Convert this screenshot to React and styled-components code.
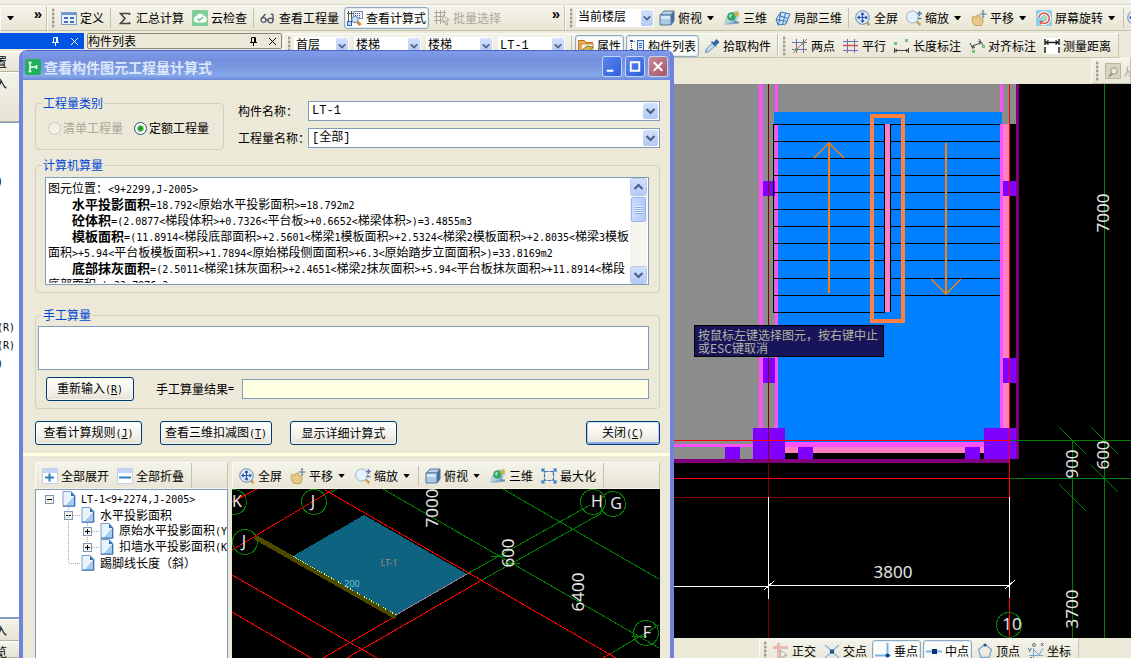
import React from "react"
import styled, { createGlobalStyle, css } from "styled-components"

const GlobalStyle = createGlobalStyle`
  * { box-sizing: border-box; }
  body {
    margin: 0;
    background: #ece9d8;
    color: #000;
    font: 12px/16px "Noto Sans CJK SC", "Liberation Sans", sans-serif;
  }
  button, select, input, textarea {
    margin: 0;
    font: inherit;
    color: inherit;
  }
`

/* ---------- text ---------- */

const Latin = styled.span`
  font-family: "DejaVu Sans Mono", "Liberation Mono", monospace;
  font-size: 10px;
`

const Strong = styled.b`
  font-size: 13px;
`

// half-width runs are set in the mono face, the rest stays in the CJK face
const Mixed = ({ children }) =>
  children
    .split(/([\x20-\x7e]+)/)
    .map((part, i) => (i % 2 ? <Latin key={i}>{part}</Latin> : part))

/* ---------- icons ---------- */

const IconSvg = styled.svg`
  flex: none;
  width: 16px;
  height: 16px;
  display: block;
`

const glyphs = {
  define: (
    <>
      <rect x="0.5" y="2.5" width="15" height="12" fill="#e8f0fb" stroke="#7d9cc9" />
      <path d="M1 3h14v2H1z" fill="#6f93cf" />
      <path d="M3 7h4v2H3zM9 7h4v2H9zM3 11h4v2H3zM9 11h4v2H9z" fill="#4a6fae" />
    </>
  ),
  sum: <path d="M12.500 5V3.500h-9L8 8.500 3.500 13.500h9V12" fill="none" stroke="#444" strokeWidth="1.600" />,
  cloud: (
    <>
      <rect width="16" height="16" rx="1" fill="#7fcf9a" />
      <path d="M4.500 12.500a3.300 3.300 0 0 1 0-6.500 4.200 4.200 0 0 1 7.500 0 3.300 3.300 0 0 1 .3 6.500z" fill="#fff" />
      <path d="M5.500 8.500l2 2 3.500-3.500" fill="none" stroke="#6cc48a" strokeWidth="1.500" />
    </>
  ),
  glasses: (
    <g fill="none" stroke="#4d566b" strokeWidth="1.300">
      <ellipse cx="3.500" cy="10" rx="2.500" ry="2.300" />
      <ellipse cx="10.500" cy="10.500" rx="2.500" ry="2.300" />
      <path d="M1.500 8.500L5.500 4M6 10h2M13 10.500V4.500l-2-.5" />
    </g>
  ),
  formula: (
    <>
      <path d="M1.500 1v13M4.500 1v13M0 3.500h6" stroke="#555" fill="none" />
      <rect x="6.500" y="1.500" width="9" height="7" fill="#eef3fa" stroke="#7a8fb0" />
      <path d="M8 3.500h6M8 5.500h6M8 7.500h6" stroke="#4a5f88" strokeDasharray="1 1" />
      <rect x="0.500" y="11.500" width="4" height="4" fill="#bcd6f5" stroke="#2a62b8" />
      <circle cx="8" cy="9.500" r="3.200" fill="#cfe6f8" stroke="#5e86b8" />
      <path d="M10.500 12l3 3" stroke="#d9822b" strokeWidth="3" />
    </>
  ),
  batch: (
    <g fill="none" stroke="#aaa899">
      <path d="M0 2.500h12M0 6.500h9M0 10.500h8M2.500 0v14M6.500 0v14M10.500 0v6" />
      <path d="M9 5l6 5-3 .5 2 4-2 .5-1.500-4L9 13z" fill="#ece9d8" />
    </g>
  ),
  cube: (
    <>
      <path d="M1 5l4-4h10l-3 4z" fill="#b8cfe4" stroke="#54789c" />
      <path d="M12 5l3-4v10l-3 4z" fill="#3f6c99" stroke="#54789c" />
      <path d="M1 5h11v10H1z" fill="#a9c9e8" stroke="#54789c" />
      <path d="M2 6h9v3H2z" fill="#d8e9f7" />
    </>
  ),
  orbit: (
    <>
      <path d="M0 14.500C0 8 5 2 14 .5c2 2 2 5 0 8-3 4-8 6-14 6z" fill="#b9d0dd" />
      <path d="M0 14.500c5-1 9-3 12-6l1 5-5 1z" fill="#8fb0c8" />
      <circle cx="7.500" cy="6.500" r="4.300" fill="#2fa566" />
      <path d="M5 6.500a2.500 2.500 0 0 1 3-2.500l-1.500 4z" fill="#a8ecd0" />
      <circle cx="12.500" cy="4" r="2.300" fill="#d9ad38" />
      <path d="M10 12.500h5" stroke="#5a8cc0" strokeWidth="2" />
    </>
  ),
  part3d: (
    <g fill="#cfe4f6" stroke="#3f78b5">
      <path d="M1 9l5-7 9 2-4 10-8 1z" />
      <path d="M3.500 5.500l9.500 3M1.500 9.500l10.500 2M6 2L3.500 14.500M10.500 3L7.500 14.500" fill="none" />
    </g>
  ),
  full: (
    <>
      <path d="M11.500 12l3 3" stroke="#cf9a4a" strokeWidth="2.500" />
      <circle cx="7.500" cy="7.500" r="6.800" fill="#dbe9fa" stroke="#6d87ad" />
      <path d="M7.500 3v9M3 7.500h9M6 4.500L7.500 3 9 4.500M6 10.500L7.500 12 9 10.500M4.500 6L3 7.500 4.500 9M10.500 6L12 7.500 10.500 9" fill="none" stroke="#2c55a8" strokeWidth="1.200" />
    </>
  ),
  zoom: (
    <>
      <path d="M10 11l4.500 4" stroke="#cfa060" strokeWidth="2.500" />
      <circle cx="6.500" cy="7" r="6" fill="#e4f0fa" stroke="#9fb4cc" />
      <path d="M11 3.500h5M13.500 1v5M11.500 8.500h4" stroke="#5c7ba6" strokeWidth="1.300" />
    </>
  ),
  pan: (
    <>
      <path d="M1 8l1.500-2 3 1.500L6 5l2.500.5.5 2.500 3 1v3.500L10.500 15.500h-7L1.500 12z" fill="#e6c888" stroke="#c9a562" />
      <path d="M12 .5v7M8.500 4h7M11 1.500l1-1 1 1M11 6.500l1 1 1-1" fill="none" stroke="#5a6d8c" />
    </>
  ),
  rotate: (
    <>
      <rect width="16" height="16" fill="#8fd0e6" />
      <path d="M3 7a5.200 5.200 0 1 1 2 5.500" fill="none" stroke="#fff" strokeWidth="3.500" />
      <path d="M3 7a5.200 5.200 0 1 1 2 5.500" fill="none" stroke="#e05545" strokeWidth="1.500" />
      <path d="M3.500 11l4 0-3 4z" fill="#e05545" />
      <circle cx="8" cy="8" r="2" fill="#b5dd8a" />
    </>
  ),
  props: (
    <>
      <path d="M0.500 2.500h6l1 2h7v9H.5z" fill="#f4a94e" stroke="#b8701c" />
      <path d="M3 6h12v7H3z" fill="#fff5df" stroke="#c08438" />
      <path d="M4 12l5-4 6 1-3 4-5 2z" fill="#e2b14a" stroke="#6b7a34" />
    </>
  ),
  list: (
    <>
      <path d="M1 3h3M1 12h3" stroke="#2b4d8c" strokeWidth="2" />
      <path d="M5 3.500h2M5 12.500h2M2.500 5v5" stroke="#555" strokeDasharray="1 1" />
      <rect x="8.500" y="2.500" width="6" height="11" fill="#dbe8fb" stroke="#3c68b4" />
      <path d="M10 5.500h3M10 7.500h3M10 9.500h3" stroke="#3c68b4" />
    </>
  ),
  dropper: (
    <>
      <path d="M1.500 14.500l1-3.500L8 5.500l2.500 2.500L5 13.500z" fill="#c9e2f6" stroke="#5687b8" />
      <path d="M7.500 3.500l5 5M9.500 5.500l3-3.500 2 2-3 3z" fill="#2f66a6" stroke="#2f66a6" strokeWidth="1.500" />
    </>
  ),
  twoPoint: (
    <g fill="none">
      <path d="M4.500 1v14M11.500 1v14M0 4.500h15M0 11.500h15" stroke="#6a70b8" />
      <path d="M1 15L15 1" stroke="#d05050" />
      <circle cx="4.500" cy="11.500" r="1.500" fill="#5c9c50" />
      <circle cx="11" cy="5" r="1.500" fill="#5c9c50" />
    </g>
  ),
  parallel: (
    <g fill="none">
      <path d="M4.500 1v14M11.500 1v14M0 12.500h15M0 3.500h15" stroke="#6a70b8" />
      <path d="M0 7.500h15" stroke="#d05050" strokeWidth="1.500" />
    </g>
  ),
  lengthDim: (
    <>
      <path d="M.5 10v5M14.500 10v5M1 12.500h13M3 11l-2 1.500L3 14M12 11l2 1.500-2 1.500" fill="none" stroke="#444" />
      <path d="M0 4h3v3H0zM11 1h3v3h-3z" fill="#69c47c" />
    </>
  ),
  alignDim: (
    <>
      <path d="M1 5l3 6M10 1l4 6M3 9l9-5M5 6.500L3 9l3 .5M9.500 3.500L12 4l-1.500 2.500" fill="none" stroke="#444" />
      <path d="M3 12h3v3H3zM13 7h3v3h-3z" fill="#69c47c" />
    </>
  ),
  measure: (
    <>
      <rect width="16" height="16" fill="#fff" />
      <path d="M1 1v14M15 1v14" stroke="#222" strokeWidth="1.500" strokeDasharray="6 2" />
      <path d="M2 4.500h12M4.500 2.500L2 4.500l2.500 2M11.500 2.500L14 4.500l-2.500 2" fill="none" stroke="#222" strokeWidth="1.400" />
    </>
  ),
  find: (
    <>
      <path d="M.5.500h15v15H.5z" fill="#d8d4c2" stroke="#b9b5a2" />
      <circle cx="9" cy="8" r="3.200" fill="#eeebdc" stroke="#999582" />
      <path d="M7 10.500L4 13.500" stroke="#999582" strokeWidth="2" />
    </>
  ),
  ortho: (
    <>
      <path d="M4 0h3v15H4zM0 3h15v3H0z" fill="#e8b9b4" />
      <path d="M7 7l7 5-3 .5 2 3-1.500.5L9.500 13 8 14.500z" fill="#f7f5ee" stroke="#a9aab0" />
    </>
  ),
  cross: (
    <>
      <path d="M1 2l14 13M15 2L1 15" stroke="#7fb6e8" strokeWidth="1.300" />
      <rect x="6" y="6.500" width="4" height="4" fill="#1f4f94" />
    </>
  ),
  perp: (
    <>
      <path d="M12.500 0v13M0 12.500h16" stroke="#7fb6e8" strokeWidth="2" />
      <circle cx="12.500" cy="12.500" r="2" fill="#10408c" />
    </>
  ),
  mid: (
    <>
      <path d="M0 8.500h16" stroke="#7fb6e8" strokeWidth="2" />
      <rect x="6" y="6" width="5" height="5" fill="#0b2d7c" />
    </>
  ),
  vertex: (
    <>
      <path d="M8 1.500l6.500 5-2.500 8H4l-2.500-8z" fill="none" stroke="#7aa6dc" strokeWidth="1.300" />
      <circle cx="8" cy="2" r="1.600" fill="#1f4f94" />
    </>
  ),
  coord: (
    <g fill="none" stroke="#7aa6dc">
      <path d="M5.500 5v10M1 12.500h14M6 7l5 5 4-7" />
      <path d="M13 0l2.500 3M15.500 0L13 3M0 5l2 2.500M3.500 5L1 9M2 14.500h2" stroke="#5f6f86" />
      <circle cx="6" cy="2" r="1.500" stroke="#5f6f86" />
    </g>
  ),
  expand: (
    <>
      <path d="M.5.500h15v15H.5z" fill="#fff" stroke="#c3cfee" />
      <path d="M1 1h14v4H1z" fill="#c8d4f6" />
      <path d="M7.500 5.500v8M3 9.500h9" stroke="#2c80b8" strokeWidth="2" />
    </>
  ),
  collapse: (
    <>
      <path d="M.5.500h15v15H.5z" fill="#fff" stroke="#c3cfee" />
      <path d="M1 1h14v4H1z" fill="#c8d4f6" />
      <path d="M2 9.500h12" stroke="#2c80b8" strokeWidth="2" />
    </>
  ),
  maximize: (
    <g fill="none" stroke="#3b78cc" strokeWidth="1.200">
      <rect x="3.500" y="3.500" width="9" height="9" strokeDasharray="4 1" />
      <path d="M1 4V1h3M12 1h3v3M15 12v3h-3M4 15H1v-3M1 1l3.500 3.500M15 1l-3.500 3.500M15 15l-3.500-3.500M1 15l3.500-3.500" />
    </g>
  ),
  page: (
    <>
      <path d="M2 .5h8l4 4v11H2z" fill="#e9f3fd" stroke="#7c9cc6" />
      <path d="M14 5v10.500H4L13 5z" fill="#a5ccf2" />
      <path d="M10 .5V5h4z" fill="#2f6fc0" />
      <path d="M13.500 5v10H2" fill="none" stroke="#3f6fb0" />
    </>
  ),
}

const Icon = ({ name }) => (
  <IconSvg viewBox="0 0 16 16" aria-hidden="true">
    {glyphs[name]}
  </IconSvg>
)

/* ---------- toolbars ---------- */

const Bar = styled.div`
  display: flex;
  flex: none;
  height: ${p => p.$height || 26}px;
  overflow: hidden;
  white-space: nowrap;
`

const Band = styled.div`
  display: flex;
  align-items: center;
  gap: 2px;
  flex: ${p => (p.$width ? `0 0 ${p.$width}px` : "none")};
  min-width: 0;
  overflow: hidden;
  padding: 0 4px;
  border: 1px solid;
  border-color: #fbfaf4 #c5c2ae #c5c2ae #fbfaf4;
  background: linear-gradient(#f4f3ea, #e9e6d5);
`

const Grip = styled.i`
  flex: none;
  width: 3px;
  height: 20px;
  margin-right: 1px;
  background: radial-gradient(circle at 1px 2px, #a19f90 1px, transparent 2px) 0 0 / 3px 4px;
`

const Divider = styled.i`
  flex: none;
  width: 1px;
  height: 20px;
  margin: 0 1px;
  background: #c5c2ae;
`

const Tool = styled.button`
  display: flex;
  align-items: center;
  gap: 3px;
  flex: none;
  height: 22px;
  padding: 0 2px;
  border: 1px solid transparent;
  border-radius: 3px;
  background: none;
  line-height: 16px;

  &:disabled {
    color: #aca899;
  }

  ${p =>
    p.$pressed &&
    css`
      background: #fbfbf8;
      border-color: #8ea9c4;
      box-shadow: inset 0 0 0 1px #e3ebf2;
    `}
`

const Arrow = styled.i`
  flex: none;
  width: 11px;
  height: 4px;
  background: #000;
  clip-path: polygon(2px 0, 9px 0, 6px 4px, 5px 4px);
`

const Chevrons = styled.button`
  align-self: flex-start;
  margin-left: auto;
  padding: 0;
  border: 0;
  background: none;
  font: bold 15px/16px "Liberation Sans", sans-serif;
`

const ToolButton = ({ icon, label, pressed, menu, disabled }) => (
  <Tool type="button" $pressed={pressed} disabled={disabled}>
    <Icon name={icon} />
    {label}
    {menu && <Arrow />}
  </Tool>
)

const SelectFrame = styled.span`
  display: grid;
  flex: ${p => (p.$width ? `0 0 ${p.$width}px` : "1")};
  height: ${p => (p.$plain ? 18 : 20)}px;
  border: 1px solid ${p => (p.$plain ? "#fff" : "#7f9db9")};
  background: #fff;

  > * {
    grid-area: 1 / 1;
    min-width: 0;
  }
`

const NativeSelect = styled.select`
  appearance: none;
  width: 100%;
  height: 100%;
  padding: 0 18px 0 ${p => (p.$plain ? 1 : 3)}px;
  border: 0;
  background: none;
  font-family: "Liberation Mono", "Noto Sans CJK SC", monospace;
  line-height: 16px;
`

const ChevronSvg = styled.svg`
  justify-self: end;
  align-self: center;
  width: ${p => (p.$plain ? 12 : 15)}px;
  height: 16px;
  margin-right: ${p => (p.$plain ? 0 : 1)}px;
  border-radius: 2px;
  background: linear-gradient(#d3e0fc, #b3c9f7);
  pointer-events: none;
`

const Chevron = ({ up, plain }) => (
  <ChevronSvg viewBox="0 0 15 16" $plain={plain} aria-hidden="true">
    <path
      d={up ? "M3.500 10l4-4 4 4" : "M3.500 6l4 4 4-4"}
      fill="none"
      stroke="#4d6185"
      strokeWidth="2.200"
    />
  </ChevronSvg>
)

const Combo = ({ id, label, value, width, plain }) => (
  <SelectFrame $width={width} $plain={plain}>
    <NativeSelect id={id} aria-label={label} defaultValue={value} $plain={plain}>
      <option>{value}</option>
    </NativeSelect>
    <Chevron plain={plain} />
  </SelectFrame>
)

/* ---------- application frame ---------- */

const Frame = styled.div`
  position: relative;
  display: flex;
  flex-direction: column;
  height: 100vh;
  overflow: hidden;
`

const MenuEdge = styled.div`
  display: flex;
  flex: none;
  height: 5px;
  padding-bottom: 1px;
  background: #f0efe6;
  border-bottom: 1px solid #dedbca;
`

const Workspace = styled.div`
  display: flex;
  flex: 1;
  min-height: 0;
  padding-top: 2px;
`

const Dock = styled.section`
  display: flex;
  flex-direction: column;
  flex: 0 0 ${p => p.$width}px;
  margin-right: ${p => p.$gap}px;
  overflow: hidden;
`

const DockTitle = styled.header`
  display: flex;
  align-items: center;
  justify-content: flex-end;
  gap: 10px;
  flex: none;
  height: 16px;
  margin-bottom: 2px;
  padding: 0 4px 0 0;
  background: ${p => (p.$active ? "#0054e3" : "transparent")};
  color: ${p => (p.$active ? "#fff" : "#000")};
  border: 1px solid ${p => (p.$active ? "#0054e3" : "#8c8a7c")};
  border-radius: ${p => (p.$active ? 0 : 2)}px;
  line-height: 14px;

  > span {
    margin-right: auto;
  }
  > svg {
    width: 9px;
    height: 9px;
  }
`

const DockTools = () => (
  <>
    <svg viewBox="0 0 9 9" fill="none" stroke="currentColor" aria-hidden="true">
      <path d="M2.500.500h4v5M5.500 1v5M1 5.500h7M4.500 6v3M2.500 1v5" />
    </svg>
    <svg viewBox="0 0 9 9" fill="none" stroke="currentColor" aria-hidden="true">
      <path d="M1 1l7 7M8 1L1 8" />
    </svg>
  </>
)

const DockTab = styled.div`
  flex: none;
  height: ${p => p.$height}px;
  padding-top: 2px;
  border-bottom: 1px solid #b5b2a0;
  border-top: 1px solid #fff;
  background: linear-gradient(#f4f3ea, #e6e3d2);
  text-indent: -5px;
`

const DockTree = styled.div`
  flex: 1;
  min-height: 0;
  overflow: hidden;
  padding-top: 49px;
  border: solid #7f9db9;
  border-width: 1px 0 2px;
  background: #fff;
  text-indent: -3px;

  > p {
    margin: 0 0 128px;
  }
`

const Drafting = styled.main`
  display: flex;
  flex-direction: column;
  flex: 1;
  min-width: 0;
`

const Viewport = styled.div`
  position: relative;
  flex: 1;
  min-height: 0;
  background: #000;
`

const Drawing = styled.svg`
  display: block;
  width: 100%;
  height: 100%;
  font: 17px "Noto Sans", sans-serif;
`

const CursorTip = styled.div`
  position: absolute;
  top: 241px;
  right: 247px;
  width: 190px;
  padding: 2px 4px 2px 3px;
  border: 1px solid #000;
  background: #18145a;
  color: #b4b4a4;
  line-height: 13px;
`

const Spacer = styled.div`
  flex: ${p => (p.$width ? `0 0 ${p.$width}px` : 1)};
`

const treads = [124, 141, 158, 175, 192, 209, 226, 243, 260, 278, 295]

const rects = (color, list) => (
  <g fill={color}>
    {list.map(([x, y, w, h]) => (
      <rect key={`${x}-${y}`} x={x} y={y} width={w} height={h} />
    ))}
  </g>
)

const Dimension = ({ x, y, upright, children, ...rest }) => (
  <text
    x={x}
    y={y}
    dy="6"
    fill="#e4e4e4"
    textAnchor="middle"
    transform={upright ? `rotate(-90 ${x} ${y})` : undefined}
    {...rest}
  >
    {children}
  </text>
)

const StairPlan = () => (
  <Drawing viewBox="283 84 848 554" preserveAspectRatio="xMaxYMin slice" shapeRendering="crispEdges">
    {rects("#8c8c8c", [[283, 84, 470, 375], [753, 84, 32, 344], [785, 84, 231, 40]])}
    {rects("#0080ff", [[774, 112, 228, 12], [778, 124, 222, 318]])}
    {rects("#ff50ff", [
      [759, 84, 4, 344], [775, 84, 3, 28], [775, 124, 3, 304], [1000, 84, 3, 28],
      [1000, 124, 3, 304], [283, 444, 470, 3], [785, 442, 199, 5],
    ])}
    {rects("#ff80c0", [[1003, 124, 6, 304], [785, 447, 199, 6], [885, 124, 5, 188]])}
    {rects("#800080", [[1016, 84, 3, 375], [283, 459, 726, 4]])}
    {rects("#8000ff", [
      [763, 181, 12, 15], [1003, 181, 13, 15], [763, 358, 12, 25], [1003, 358, 13, 25],
      [753, 428, 32, 31], [984, 428, 32, 31], [725, 447, 15, 12], [798, 447, 15, 12], [965, 447, 15, 12],
    ])}
    <g stroke="#000" fill="none">
      {treads.map(y => (
        <path key={y} d={`M773 ${y + 0.5}h112M890 ${y + 0.5}h110`} />
      ))}
      <path d="M773.500 124v188.500h111V124M890.500 124v188" />
    </g>
    <rect x="872" y="116" width="31" height="205" fill="none" stroke="#ff8040" strokeWidth="4" />
    <g stroke="#ff8000" fill="none">
      <path d="M829 142v151M946 143v150" strokeWidth="2" />
      <path d="M814 158l15-15 15 15M931 279l15 15 15-15" shapeRendering="auto" strokeWidth="1.400" />
    </g>
    <path d="M768.500 84v554M283 497.500h726" stroke="#800000" />
    <path d="M1009.500 84v554M283 440.500h726M283 478.500h726" stroke="#f00" />
    <g stroke="#008000" fill="none">
      <path d="M1104.500 84v554M1072.500 440v198M1010 440.500h121M1010 478.500h121" />
      <path d="M1059 427l27 27M1091 427l27 27M1091 465l27 27M1059 484l27 27" />
      <circle cx="1009" cy="625" r="12.500" />
    </g>
    <path
      d="M768.500 497v102M1009.500 497v101M768 585.500h241M283 586.500h485M764 590l10-9M1005 589l10-9"
      stroke="#fff"
    />
    <Dimension x={893} y={572}>3800</Dimension>
    <Dimension x={1012} y={624}>10</Dimension>
    <Dimension x={1103} y={213} upright>7000</Dimension>
    <Dimension x={1072} y={464} upright>900</Dimension>
    <Dimension x={1103} y={455} upright>600</Dimension>
    <Dimension x={1072} y={609} upright>3700</Dimension>
  </Drawing>
)

/* ---------- dialog ---------- */

const Dialog = styled.section`
  position: absolute;
  left: 19px;
  top: 50px;
  bottom: 0;
  width: 655px;
  display: flex;
  flex-direction: column;
  border: solid #6f83de;
  border-width: 0 4px;
  border-radius: 8px 8px 0 0;
  background: #ece9d8;
  overflow: hidden;
`

const TitleBar = styled.header`
  display: flex;
  align-items: center;
  gap: 3px;
  flex: none;
  height: 30px;
  margin: 0 -4px;
  padding: 2px 6px 0;
  border-top: 1px solid #4a64c8;
  background: linear-gradient(#7f9ae8, #7690de 30%, #7c98e0 60%, #84a8ea 85%, #7086d8);

  > h1 {
    flex: 1;
    margin: 0;
    color: #dbe7fb;
    font-size: 14px;
    line-height: 20px;
  }
`

const Caption = styled.button`
  width: 20px;
  height: 21px;
  padding: 0;
  border: 1px solid #c5d3f5;
  border-radius: 3px;
  background: ${p =>
    p.$close ? "linear-gradient(135deg, #c98a98, #a85466)" : "linear-gradient(135deg, #5b85ee, #2f5fdc)"};

  > svg {
    display: block;
  }
`

const CaptionButton = ({ label, d, close }) => (
  <Caption type="button" aria-label={label} $close={close}>
    <svg width="18" height="19" viewBox="0 0 19 19" fill="none" stroke="#fff" aria-hidden="true">
      <path d={d} strokeWidth="2" />
    </svg>
  </Caption>
)

const Form = styled.form`
  padding: 17px 10px 0 12px;
`

const Row = styled.div`
  display: flex;
  align-items: ${p => p.$align || "center"};
  gap: ${p => p.$gap || 0}px;
  padding-left: ${p => p.$indent || 0}px;
  margin-top: ${p => p.$top || 0}px;
`

const Group = styled.fieldset`
  min-width: 0;
  margin: ${p => p.$top || 0}px 0 0;
  padding: ${p => p.$pad};
  border: 1px solid #d0d0bf;
  border-radius: 4px;

  > legend {
    margin-left: ${p => p.$legend}px;
    padding: 0 1px;
    color: #0046d5;
    line-height: 12px;
  }
`

const RadioLabel = styled.label`
  display: flex;
  align-items: center;
  gap: 2px;
  height: 14px;
  color: ${p => (p.$disabled ? "#aca899" : "#000")};
`

const Radio = styled.input`
  appearance: none;
  width: 13px;
  height: 13px;
  margin: 0;
  border: 1px solid #1c5180;
  border-radius: 50%;
  background: #fff;

  &:checked {
    background: radial-gradient(circle, #21a121 2px, #fff 4px);
  }
  &:disabled {
    border-color: #cac8bb;
    background: #f3f1e6;
  }
`

const Fields = styled.div`
  display: grid;
  grid-template-columns: 70px 1fr;
  align-items: center;
  align-content: start;
  row-gap: 7px;
  flex: 1;
  padding-top: 4px;

  > label {
    white-space: nowrap;
  }
`

const ResultBox = styled.div`
  display: flex;
  height: 108px;
  padding: 1px;
  border: 1px solid #7f9db9;
  background: #fff;
`

const ResultText = styled.div`
  flex: 1;
  min-width: 0;
  padding: 1px 1px 0;
  overflow: hidden;

  > p {
    height: 16px;
    margin: 0;
    line-height: 16px;
    white-space: pre;
  }
`

const ScrollTrack = styled.div`
  display: flex;
  flex-direction: column;
  gap: 2px;
  width: 17px;
  padding: 0 1px;
  background: #f5f4ee;

  > svg {
    flex: none;
    margin: 0;
    box-shadow: 0 0 0 1px #b9c9ee;
  }
  > svg:last-child {
    margin-top: auto;
  }
`

const ScrollThumb = styled.i`
  display: block;
  width: 15px;
  height: 25px;
  border: 1px solid #98b4ee;
  border-radius: 2px;
  background:
    repeating-linear-gradient(#eaf1ff 0 1px, #8ba9ea 1px 2px) center / 7px 8px no-repeat,
    linear-gradient(90deg, #cddbfd, #b5c9f8);
`

const ManualInput = styled.textarea`
  display: block;
  width: 100%;
  height: 44px;
  border: 1px solid #7f9db9;
  background: #fff;
  resize: none;
`

const ResultInput = styled.input`
  flex: 1;
  min-width: 0;
  height: 20px;
  border: 1px solid #7f9db9;
  background: #ffffe1;
`

const PushButton = styled.button`
  height: 24px;
  min-width: ${p => p.$min || 107}px;
  padding: 0 4px;
  border: 1px solid #003c74;
  border-radius: 3px;
  background: linear-gradient(#fff, #f3f2ec 60%, #e3dfd2);
  box-shadow: ${p =>
    p.$default ? "inset 0 1px #cee7ff, inset 1px 0 #b5ccf0, inset -1px 0 #b5ccf0, inset 0 -2px #8daae8" : "inset 0 0 0 1px #f6f5f0"};
  line-height: 16px;
`

const Mnemonic = ({ letter }) => (
  <Latin>
    (<u>{letter}</u>)
  </Latin>
)

const Splitter = styled.hr`
  flex: none;
  height: 3px;
  margin: 8px 0 6px;
  border: 0;
  background: #ffffe1;
  width: 100%;
`

const Panes = styled.div`
  display: flex;
  gap: 4px;
  flex: 1;
  min-height: 0;
  padding: 0 10px 0 12px;
`

const Pane = styled.div`
  display: flex;
  flex-direction: column;
  flex: ${p => (p.$width ? `0 0 ${p.$width}px` : 1)};
  min-width: 0;
`

const PaneBar = styled(Bar)`
  border: 1px solid;
  border-color: #fbfaf4 #c5c2ae transparent #fbfaf4;
  background: linear-gradient(#f4f3ea, #e6e3d2);

  > ${Band} {
    border-width: 0 1px 0 0;
    padding: 0 4px 0 3px;
  }
`

const Tree = styled.ul`
  flex: 1;
  min-height: 0;
  margin: 0;
  padding: 1px 0 0 9px;
  overflow: hidden;
  border: 1px solid #7f9db9;
  border-width: 1px 1px 0;
  background: #fff;
  list-style: none;
`

const TreeItem = styled.li`
  display: flex;
  align-items: center;
  height: 16px;
  padding-left: ${p => p.$level * 19}px;
  white-space: nowrap;

  > svg:not(:first-child) {
    margin: 0 4px 0 -3px;
  }
`

const TreeGutter = styled.svg`
  flex: none;
  width: 19px;
  height: 16px;
  overflow: visible;
`

const branches = [
  { level: 0, open: true, text: "LT-1<9+2274,J-2005>" },
  { level: 1, open: true, text: "水平投影面积" },
  { level: 2, open: false, text: "原始水平投影面积(Y" },
  { level: 2, open: false, text: "扣墙水平投影面积(K" },
  { level: 1, stem: 44, text: "踢脚线长度（斜）" },
]

const Branch = ({ level, open, stem = 8, text }) => (
  <TreeItem $level={level}>
    <TreeGutter viewBox="0 0 19 16" shapeRendering="crispEdges" aria-hidden="true">
      {level > 0 && (
        <path d={`M4.500 ${4 - stem}V8M5 8.500h12`} stroke="#aca899" strokeDasharray="1 1" />
      )}
      {open !== undefined && (
        <>
          <rect x="0.500" y="4.500" width="8" height="8" fill="#f4f2ea" stroke="#7898b5" />
          <path d={open ? "M2 8.500h5" : "M2 8.500h5M4.500 6v5"} stroke="#000" />
        </>
      )}
    </TreeGutter>
    <Icon name="page" />
    <span>
      <Mixed>{text}</Mixed>
    </span>
  </TreeItem>
)

const Preview = styled.div`
  flex: 1;
  min-height: 0;
  background: #000;
`

const bubbles = [
  ["K", 234, 502, 237], ["J", 314, 502, 313], ["J", 245, 542, 244],
  ["H", 593, 502, 597], ["G", 613, 504, 616], ["F", 646, 633, 647],
]

const AxisPreview = () => (
  <Drawing viewBox="232 489 428 169" preserveAspectRatio="xMinYMin slice" shapeRendering="crispEdges">
    <g stroke="#008000" fill="none">
      <path d="M383 489L659 648M503 489L659 579M330 493l7-4M467 574L590 505M482 580L602 513M610 654L659 625" />
      <path d="M491 556.500h18M503 563.500h17M632 636.500h15" />
      {bubbles.map(([name, cx, cy]) => (
        <circle key={`${name}${cx}`} cx={cx} cy={cy} r="12.500" />
      ))}
    </g>
    <path
      d="M232 550L332 490M232 502L257 489M325 490L616 658M232 575L377 658M232 612L311 658M323 658L396 616M347 658L482 580M603 658l8-5"
      stroke="#f00"
      fill="none"
    />
    <path d="M255 537L396 617" stroke="#4d4a00" strokeWidth="5" />
    <path d="M293 556L364 515L467 574L396 615z" fill="#0e6480" />
    <path d="M467 574L396 615" stroke="#a07898" />
    <path d="M293 556L396 615" stroke="#e8ff70" strokeDasharray="1 1" />
    <text x="389" y="566" fontSize="9" fill="#a08878" textAnchor="middle">LT-1</text>
    <text x="352" y="587" fontSize="9" fill="#6cc0dc" textAnchor="middle">200</text>
    {bubbles.map(([name, cx, cy, x]) => (
      <Dimension key={`${name}${cx}`} x={x} y={cy - 1} fontSize="16">
        {name}
      </Dimension>
    ))}
    <Dimension x={432} y={508} upright>7000</Dimension>
    <Dimension x={508} y={553} upright>600</Dimension>
    <Dimension x={578} y={592} upright>6400</Dimension>
  </Drawing>
)

const results = [
  ["", "图元位置：<9+2299,J-2005>"],
  ["水平投影面积", "=18.792<原始水平投影面积>=18.792m2"],
  ["砼体积", "=(2.0877<梯段体积>+0.7326<平台板>+0.6652<梯梁体积>)=3.4855m3"],
  ["模板面积", "=(11.8914<梯段底部面积>+2.5601<梯梁1模板面积>+2.5324<梯梁2模板面积>+2.8035<梯梁3模板"],
  ["", "面积>+5.94<平台板模板面积>+1.7894<原始梯段侧面面积>+6.3<原始踏步立面面积>)=33.8169m2"],
  ["底部抹灰面积", "=(2.5011<梯梁1抹灰面积>+2.4651<梯梁2抹灰面积>+5.94<平台板抹灰面积>+11.8914<梯段"],
  ["", "底部面积>)=22.7976m2"],
]

const FormulaDialog = () => (
  <Dialog role="dialog" aria-labelledby="dialog-title">
    <TitleBar>
      <svg width="16" height="16" viewBox="0 0 16 16" aria-hidden="true">
        <rect width="16" height="16" rx="3" fill="#23b05c" />
        <path d="M5 3v10M5 8h6M3.500 3.500h3M3.500 12.500h3M11.500 6v4" fill="none" stroke="#fff" strokeWidth="1.500" />
      </svg>
      <h1 id="dialog-title">查看构件图元工程量计算式</h1>
      <CaptionButton label="最小化" d="M4 14h7" />
      <CaptionButton label="最大化" d="M4 5h11M5 5v9h9V5" />
      <CaptionButton label="关闭" d="M5 5l9 9M14 5l-9 9" close />
    </TitleBar>
    <Form onSubmit={e => e.preventDefault()}>
      <Row $align="stretch" $gap={14}>
        <Group $pad="12px 14px 14px 12px" $legend={-6}>
          <legend>工程量类别</legend>
          <Row $gap={11}>
            <RadioLabel $disabled>
              <Radio type="radio" name="kind" disabled />
              清单工程量
            </RadioLabel>
            <RadioLabel>
              <Radio type="radio" name="kind" defaultChecked />
              定额工程量
            </RadioLabel>
          </Row>
        </Group>
        <Fields>
          <label htmlFor="component">构件名称：</label>
          <Combo id="component" value="LT-1" />
          <label htmlFor="quantity">工程量名称：</label>
          <Combo id="quantity" value="[全部]" />
        </Fields>
      </Row>
      <Group $top={9} $pad="6px 10px 7px 9px" $legend={-3}>
        <legend>计算机算量</legend>
        <ResultBox>
          <ResultText>
            {results.map(([name, formula]) => (
              <p key={formula}>
                {name && <Latin>{"    "}</Latin>}
                {name && <Strong>{name}</Strong>}
                <Mixed>{formula}</Mixed>
              </p>
            ))}
          </ResultText>
          <ScrollTrack>
            <Chevron up />
            <ScrollThumb />
            <Chevron />
          </ScrollTrack>
        </ResultBox>
      </Group>
      <Group $top={16} $pad="5px 10px 7px 2px" $legend={4}>
        <legend>手工算量</legend>
        <ManualInput aria-label="手工算量" />
        <Row $top={7} $indent={8}>
          <PushButton type="button" $min={88}>
            重新输入
            <Mnemonic letter="R" />
          </PushButton>
          <Row as="label" htmlFor="manual-result" $indent={22}>
            手工算量结果<Latin>=</Latin>
          </Row>
          <Spacer $width={8} />
          <ResultInput id="manual-result" readOnly />
        </Row>
      </Group>
      <Row $top={12} $gap={18}>
        <PushButton type="button">
          查看计算规则
          <Mnemonic letter="J" />
        </PushButton>
        <PushButton type="button">
          查看三维扣减图
          <Mnemonic letter="T" />
        </PushButton>
        <PushButton type="button">显示详细计算式</PushButton>
        <Spacer />
        <PushButton type="button" $min={74} $default>
          关闭
          <Mnemonic letter="C" />
        </PushButton>
      </Row>
    </Form>
    <Splitter />
    <Panes>
      <Pane $width={193}>
        <PaneBar $height={27}>
          <Band>
            <ToolButton icon="expand" label="全部展开" />
            <ToolButton icon="collapse" label="全部折叠" />
          </Band>
        </PaneBar>
        <Tree>
          {branches.map(branch => (
            <Branch key={branch.text} {...branch} />
          ))}
        </Tree>
      </Pane>
      <Pane>
        <PaneBar $height={27}>
          <Band>
            <ToolButton icon="full" label="全屏" />
            <ToolButton icon="pan" label="平移" menu />
            <ToolButton icon="zoom" label="缩放" menu />
            <Divider />
            <ToolButton icon="cube" label="俯视" menu />
            <ToolButton icon="orbit" label="三维" />
            <ToolButton icon="maximize" label="最大化" />
          </Band>
        </PaneBar>
        <Preview>
          <AxisPreview />
        </Preview>
      </Pane>
    </Panes>
  </Dialog>
)

const App = () => (
  <Frame>
    <GlobalStyle />
    <MenuEdge />
    <Bar>
      <Band $width={47}>
        <Arrow />
        <Chevrons type="button" aria-label="更多">»</Chevrons>
      </Band>
      <Band $width={518}>
        <Grip />
        <ToolButton icon="define" label="定义" />
        <Divider />
        <ToolButton icon="sum" label="汇总计算" />
        <ToolButton icon="cloud" label="云检查" />
        <Divider />
        <ToolButton icon="glasses" label="查看工程量" />
        <ToolButton icon="formula" label="查看计算式" pressed />
        <ToolButton icon="batch" label="批量选择" disabled />
        <Chevrons type="button" aria-label="更多">»</Chevrons>
      </Band>
      <Band>
        <Grip />
        <Combo label="楼层范围" value="当前楼层" width={78} plain />
        <ToolButton icon="cube" label="俯视" menu />
        <ToolButton icon="orbit" label="三维" />
        <ToolButton icon="part3d" label="局部三维" />
        <Divider />
        <ToolButton icon="full" label="全屏" />
        <ToolButton icon="zoom" label="缩放" menu />
        <ToolButton icon="pan" label="平移" menu />
        <ToolButton icon="rotate" label="屏幕旋转" menu />
        <Divider />
        <Icon name="full" />
      </Band>
    </Bar>
    <Workspace>
      <Dock $width={84} $gap={3}>
        <DockTitle $active>
          <DockTools />
        </DockTitle>
        <DockTab $height={21}>置</DockTab>
        <DockTab $height={50}>入</DockTab>
        <DockTree>
          <p><Latin>)</Latin></p>
          <div><Latin>(R)</Latin></div>
          <div><Latin>(R)</Latin></div>
          <div><Latin>)</Latin></div>
        </DockTree>
        <DockTab $height={22}>入</DockTab>
        <DockTab $height={17}>览</DockTab>
      </Dock>
      <Dock $width={195} $gap={1}>
        <DockTitle>
          <span>构件列表</span>
          <DockTools />
        </DockTitle>
      </Dock>
      <Drafting>
        <Bar $height={25}>
          <Band $width={495}>
            <Grip />
            <Combo label="楼层" value="首层" width={55} plain />
            <Spacer $width={1} />
            <Combo label="类型" value="楼梯" width={67} plain />
            <Spacer $width={1} />
            <Combo label="构件类型" value="楼梯" width={67} plain />
            <Spacer $width={1} />
            <Combo label="构件" value="LT-1" width={67} plain />
            <Spacer $width={1} />
            <Divider />
            <ToolButton icon="props" label="属性" pressed />
            <ToolButton icon="list" label="构件列表" pressed />
            <ToolButton icon="dropper" label="拾取构件" />
          </Band>
          <Band>
            <Grip />
            <ToolButton icon="twoPoint" label="两点" />
            <ToolButton icon="parallel" label="平行" />
            <ToolButton icon="lengthDim" label="长度标注" />
            <ToolButton icon="alignDim" label="对齐标注" />
            <ToolButton icon="measure" label="测量距离" />
          </Band>
        </Bar>
        <Bar>
          <Spacer />
          <Band $width={40}>
            <Grip />
            <ToolButton icon="find" label="从" disabled />
          </Band>
        </Bar>
        <Viewport>
          <StairPlan />
          <CursorTip>按鼠标左键选择图元，按右键中止或ESC键取消</CursorTip>
        </Viewport>
        <Bar $height={20}>
          <Spacer $width={476} />
          <Bar>
            <Band>
              <Grip />
              <ToolButton icon="ortho" label="正交" />
              <ToolButton icon="cross" label="交点" />
              <ToolButton icon="perp" label="垂点" pressed />
              <ToolButton icon="mid" label="中点" pressed />
              <ToolButton icon="vertex" label="顶点" />
              <ToolButton icon="coord" label="坐标" />
            </Band>
          </Bar>
        </Bar>
      </Drafting>
    </Workspace>
    <FormulaDialog />
  </Frame>
)

export default App
